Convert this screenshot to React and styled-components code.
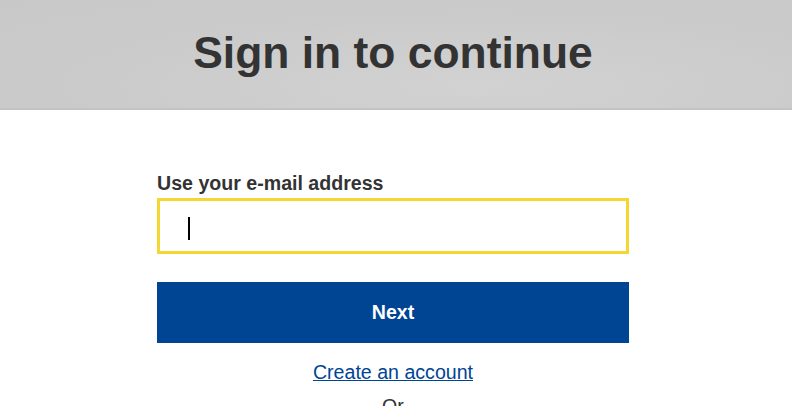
import styled, { createGlobalStyle } from "styled-components";

const GlobalStyle = createGlobalStyle`
  html, body {
    margin: 0;
    padding: 0;
    background: #ffffff;
    font-family: "Liberation Sans", Arial, sans-serif;
  }
`;

const Page = styled.div`
  width: 792px;
  height: 406px;
  overflow: hidden;
  display: flex;
  flex-direction: column;
`;

const Header = styled.header`
  flex-shrink: 0;
  height: 108px;
  border-bottom: 2px solid #c3c3c3;
  background: radial-gradient(ellipse at 60% 80%, #d2d2d2 0%, #cbcbcb 55%, #c8c8c8 100%);
  display: flex;
  align-items: center;
  justify-content: center;
  padding-right: 6px;
  h1 {
    margin: 0;
    font-size: 44.4px;
    font-weight: 700;
    color: #333333;
    line-height: 1;
    padding-bottom: 2px;
  }
`;

const Main = styled.main`
  flex-shrink: 0;
  display: flex;
  justify-content: center;
  padding: 61px 6px 0 0;
`;

const Form = styled.form`
  width: 472px;
  display: flex;
  flex-direction: column;
  align-items: stretch;
`;

const Label = styled.label`
  font-size: 19.6px;
  line-height: 24px;
  font-weight: 700;
  color: #333333;
  margin-bottom: 3px;
`;

const Field = styled.div`
  position: relative;
  height: 56px;
  box-sizing: border-box;
  border: 3px solid #f5d733;
  background: #ffffff;
`;

const Input = styled.input`
  width: 100%;
  height: 100%;
  box-sizing: border-box;
  border: none;
  outline: none;
  padding: 0 28px;
  font-size: 20px;
  font-family: inherit;
  background: transparent;
  caret-color: transparent;
`;

const Caret = styled.span`
  position: absolute;
  left: 28px;
  top: 16px;
  width: 2px;
  height: 23px;
  background: #000000;
`;

const Button = styled.button`
  margin-top: 28px;
  height: 61px;
  border: none;
  background: #004494;
  color: #ffffff;
  font-family: inherit;
  font-size: 19.6px;
  font-weight: 700;
  cursor: pointer;
`;

const LinkRow = styled.div`
  margin-top: 17px;
  text-align: center;
  font-size: 19.6px;
  line-height: 24px;
  a {
    color: #004494;
    text-decoration: underline;
  }
`;

const Or = styled.div`
  margin-top: 10px;
  text-align: center;
  font-size: 19.6px;
  line-height: 24px;
  color: #333333;
`;

export default function App() {
  return (
    <>
      <GlobalStyle />
      <Page>
        <Header>
          <h1>Sign in to continue</h1>
        </Header>
        <Main>
          <Form onSubmit={(e) => e.preventDefault()}>
            <Label htmlFor="email">Use your e-mail address</Label>
            <Field>
              <Input id="email" type="email" />
              <Caret />
            </Field>
            <Button type="submit">Next</Button>
            <LinkRow>
              <a href="#">Create an account</a>
            </LinkRow>
            <Or>Or</Or>
          </Form>
        </Main>
      </Page>
    </>
  );
}
